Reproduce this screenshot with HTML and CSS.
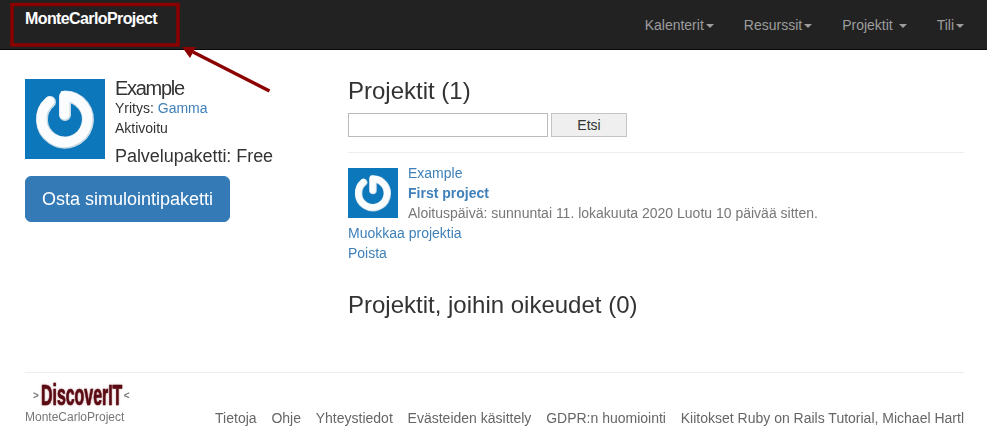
FILE: index.html
```html
<!DOCTYPE html>
<html lang="fi">
<head>
<meta charset="utf-8">
<title>MonteCarloProject</title>
<link rel="stylesheet" href="styles.css">
</head>
<body>
<svg class="defs" width="0" height="0" aria-hidden="true">
  <defs>
    <symbol id="gicon" viewBox="0 0 80 80">
      <rect width="80" height="80" fill="#0c78bb"/>
      <path d="M25 23 A23 23 0 1 0 40 17.5 V36" fill="none" stroke="#c9dbe6" stroke-width="12" stroke-linecap="round" stroke-linejoin="round"/>
      <path d="M24.5 22.5 A23 23 0 1 0 39.5 17 V35.5" fill="none" stroke="#fbfcfd" stroke-width="10" stroke-linecap="round" stroke-linejoin="round"/>
      <path d="M36 12 L44 14 L44 22 L36 22 Z" fill="#fbfcfd"/>
    </symbol>
  </defs>
</svg>
<header class="navbar">
  <a class="brand" href="#">MonteCarloProject</a>
  <nav class="nav">
    <a href="#">Kalenterit<span class="caret"></span></a>
    <a href="#">Resurssit<span class="caret"></span></a>
    <a href="#">Projektit <span class="caret"></span></a>
    <a href="#">Tili<span class="caret"></span></a>
  </nav>
</header>
<svg class="annotation" width="300" height="100" viewBox="0 0 300 100" aria-hidden="true">
  <rect x="12" y="4.5" width="166" height="40.5" fill="none" stroke="#8b0000" stroke-width="3.5"/>
  <path d="M269.5 91 L193 52" stroke="#8b0000" stroke-width="3.5" fill="none"/>
  <path d="M182 47 L196 47 L190 58 Z" fill="#8b0000"/>
</svg>
<main class="main">
  <aside class="side">
    <div class="profile">
      <svg class="avatar" aria-hidden="true"><use href="#gicon"/></svg>
      <div class="profile-text">
        <h2 class="profile-name">Example</h2>
        <div class="line">Yritys: <a href="#">Gamma</a></div>
        <div class="line">Aktivoitu</div>
        <div class="plan">Palvelupaketti: Free</div>
      </div>
    </div>
    <a class="buy" href="#">Osta simulointipaketti</a>
  </aside>
  <section class="content">
    <h1 class="title">Projektit (1)</h1>
    <form class="search">
      <input class="search-input" type="text">
      <button class="search-btn" type="button">Etsi</button>
    </form>
    <hr class="rule">
    <div class="project">
      <svg class="thumb" aria-hidden="true"><use href="#gicon"/></svg>
      <div class="project-text">
        <div class="row"><a href="#">Example</a></div>
        <div class="row"><a class="strong" href="#">First project</a></div>
        <div class="row muted">Aloituspäivä: sunnuntai 11. lokakuuta 2020 Luotu 10 päivää sitten.</div>
      </div>
    </div>
    <div class="row"><a href="#">Muokkaa projektia</a></div>
    <div class="row"><a href="#">Poista</a></div>
    <h1 class="title second">Projektit, joihin oikeudet (0)</h1>
  </section>
</main>
<footer class="footer">
  <div class="foot-brand">
    <div class="logo"><span class="chev">&gt;</span><span class="logo-word">DiscoverIT</span><span class="chev">&lt;</span></div>
    <small class="foot-name">MonteCarloProject</small>
  </div>
  <nav class="foot-nav">
    <a href="#">Tietoja</a>
    <a href="#">Ohje</a>
    <a href="#">Yhteystiedot</a>
    <a href="#">Evästeiden käsittely</a>
    <a href="#">GDPR:n huomiointi</a>
    <a href="#">Kiitokset Ruby on Rails Tutorial, Michael Hartl</a>
  </nav>
</footer>
</body>
</html>
```
FILE: styles.css
```css
* { box-sizing: border-box; }
html, body { margin: 0; padding: 0; }
body {
  width: 987px;
  height: 446px;
  overflow: hidden;
  position: relative;
  background: #fff;
  color: #333;
  font-family: "Liberation Sans", Arial, sans-serif;
  font-size: 14px;
  line-height: 20px;
  filter: blur(0.35px);
}
a { color: #3f80b9; text-decoration: none; }
.defs { position: absolute; }
.navbar {
  height: 50px;
  background: #222;
  border-bottom: 1px solid #080808;
  display: flex;
  justify-content: space-between;
  padding: 0 8px 0 25px;
}
.brand {
  color: #fff;
  font-size: 16px;
  font-weight: bold;
  letter-spacing: -0.6px;
  padding-top: 9px;
}
.nav { display: flex; }
.nav a {
  color: #9d9d9d;
  padding: 15px;
  height: 49px;
}
.caret {
  display: inline-block;
  width: 0;
  height: 0;
  margin-left: 2px;
  vertical-align: middle;
  border-top: 4px solid #9d9d9d;
  border-left: 4px solid transparent;
  border-right: 4px solid transparent;
}
.annotation { position: absolute; left: 0; top: 0; }
.main {
  display: flex;
  padding: 29px 23px 0 25px;
  height: 322px;
}
.side { width: 323px; flex: none; }
.profile { display: flex; gap: 10px; }
.avatar { width: 80px; height: 80px; flex: none; }
.profile-text { margin-top: -1px; height: 81px; }
.profile-name {
  margin: 0;
  font-size: 20px;
  font-weight: normal;
  line-height: 20px;
  letter-spacing: -1.3px;
}
.line { line-height: 20px; }
.plan { font-size: 18px; line-height: 20px; margin-top: 8px; letter-spacing: -0.05px; }
.buy {
  display: inline-block;
  margin-top: 17px;
  background: #337ab7;
  border: 1px solid #337ab7;
  border-radius: 6px;
  color: #fff;
  font-size: 18px;
  line-height: 24px;
  padding: 10px 16px;
  height: 46px;
}
.content { flex: 1; min-width: 0; margin-top: -1px; }
.title {
  margin: 0;
  font-size: 24px;
  font-weight: normal;
  line-height: 26px;
}
.search { display: flex; gap: 3px; margin-top: 9px; }
.search-input {
  width: 200px;
  height: 24px;
  border: 1px solid #bbb;
  background: #fff;
  padding: 0;
}
.search-btn {
  width: 76px;
  height: 24px;
  border: 1px solid #c4c4c4;
  background: #efefef;
  color: #333;
  font: 14px "Liberation Sans", Arial, sans-serif;
  padding: 0;
}
.rule { border: 0; border-top: 1px solid #eee; margin: 15px 0; }
.project { display: flex; gap: 10px; }
.thumb { width: 50px; height: 50px; flex: none; }
.project-text { margin-top: -5px; }
.row { height: 20px; }
.strong { font-weight: bold; }
.muted { color: #777; }
.second { margin-top: 29px; }
.footer {
  margin: 0 23px 0 25px;
  border-top: 1px solid #eee;
  display: flex;
  justify-content: space-between;
  align-items: flex-end;
  height: 74px;
  padding: 0 0 18px;
}
.foot-brand { display: flex; flex-direction: column; margin-bottom: 2px; }
.logo { display: flex; align-items: center; height: 26px; padding-left: 8px; }
.chev { color: #777; font-size: 10px; font-weight: bold; line-height: 26px; }
.logo-word {
  display: inline-block;
  width: 83px;
  margin-left: 2px;
  color: #5a0a12;
  font-family: "Liberation Sans", Arial, sans-serif;
  font-size: 30px;
  font-weight: bold;
  line-height: 22px;
  height: 22px;
  margin-bottom: 2px;
  white-space: nowrap;
  transform: scaleX(0.53);
  transform-origin: left center;
  -webkit-text-stroke: 0.7px #5a0a12;
  text-shadow: 0 0 3px #a77;
}
.foot-name { color: #777; font-size: 12px; line-height: 17px; }
.foot-nav { display: flex; gap: 14.8px; height: 20px; }
.foot-nav a { color: #666; }
```
